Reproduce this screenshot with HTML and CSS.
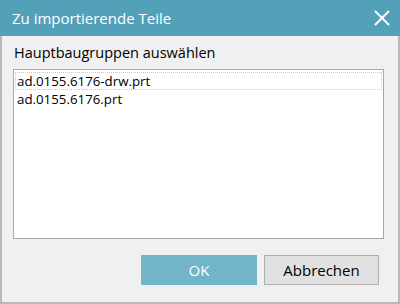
FILE: index.html
```html
<!DOCTYPE html>
<html lang="de">
<head>
    <meta charset="UTF-8">
    <title>Zu importierende Teile</title>
    <link rel="stylesheet" href="styles.css">
</head>
<body>
    <div class="dialog">
        <div class="titlebar">
            <span class="title">Zu importierende Teile</span>
            <svg class="close" width="16" height="16" viewBox="0 0 16 16">
                <path d="M1 1 L15 15 M15 1 L1 15" stroke="#fff" stroke-width="2" fill="none"/>
            </svg>
        </div>

        <div class="content">
            <div class="label">Hauptbaugruppen auswählen</div>
            <div class="listbox">
                <div class="item focused">ad.0155.6176-drw.prt</div>
                <div class="item">ad.0155.6176.prt</div>
            </div>
            <div class="buttons">
                <button class="btn ok">OK</button>
                <button class="btn cancel">Abbrechen</button>
            </div>
        </div>
    </div>
</body>
</html>
```

FILE: styles.css
```css
html, * {
    box-sizing: border-box;
    margin: 0;
    padding: 0;
}

body {
    width: 400px;
    height: 304px;
    font-family: 'Open Sans', 'Noto Sans', sans-serif;
    background: #ffffff;
}

.dialog {
    width: 400px;
    height: 304px;
    display: flex;
    flex-direction: column;
}

.titlebar {
    height: 36px;
    background: #53a0b9;
    color: #fff;
    display: flex;
    align-items: center;
    justify-content: space-between;
    padding: 0 10px 0 12px;
}

.title {
    font-size: 15px;
}

.close {
    display: block;
}

.content {
    flex: 1;
    background: #f0f0f0;
    border: 2px solid #b9b9b9;
    border-top: 0;
    padding: 6px 14px 16px 11px;
    display: flex;
    flex-direction: column;
}

.label {
    font-size: 14.5px;
    line-height: 21px;
    color: #000;
    padding-left: 1px;
    margin-bottom: 6px;
}

.listbox {
    height: 170px;
    background: #fff;
    border: 1px solid #a8a8a8;
    padding: 2px 1px;
}

.item {
    height: 18px;
    line-height: 16px;
    font-size: 13.3px;
    color: #000;
    padding-left: 1px;
    border: 1px dotted transparent;
}

.item.focused {
    border-color: #c8c8c8;
}

.buttons {
    margin-top: 16px;
    display: flex;
    justify-content: flex-end;
    gap: 7px;
    padding-right: 5px;
}

.btn {
    height: 30px;
    font-family: inherit;
    font-size: 15px;
}

.ok {
    width: 116px;
    background: #72b4c8;
    border: 1px solid #72b4c8;
    color: #fff;
}

.cancel {
    width: 115px;
    background: #e1e1e1;
    border: 1px solid #adadad;
    color: #000;
}
```
